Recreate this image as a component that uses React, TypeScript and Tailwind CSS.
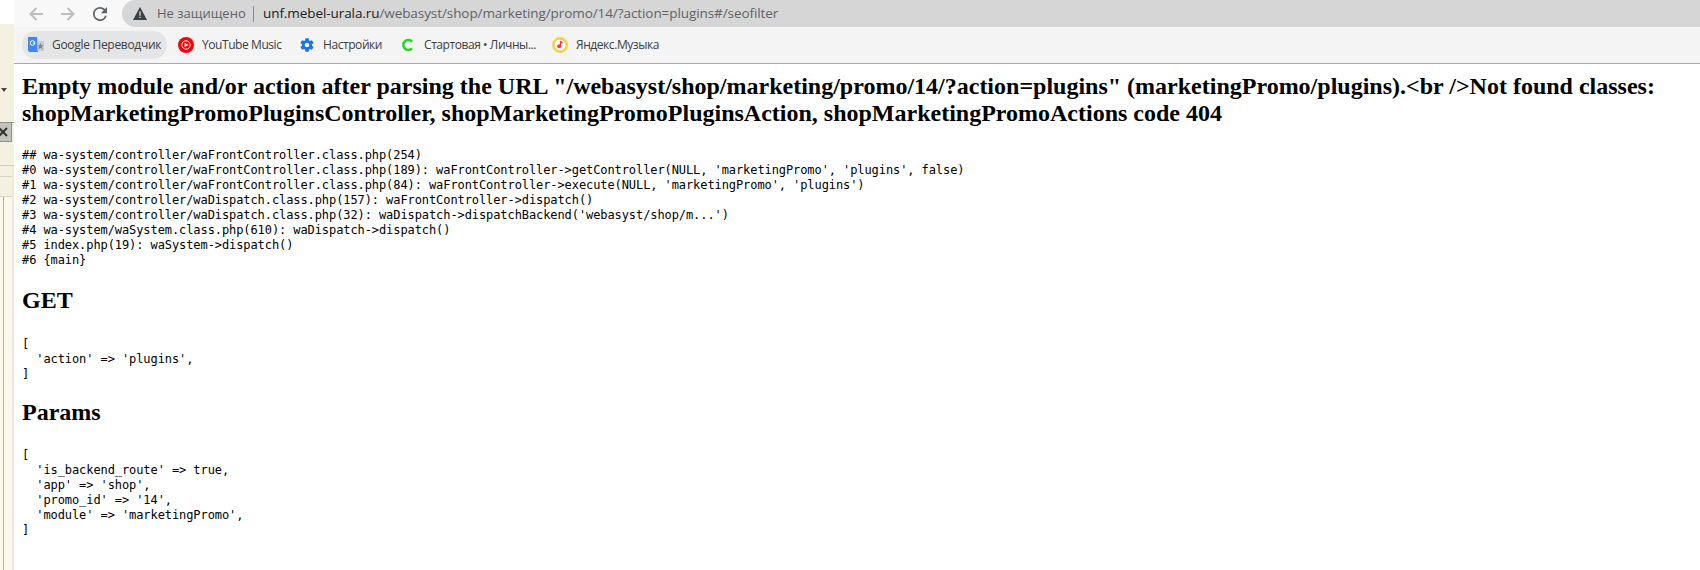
import React from "react";

const TRACE = `## wa-system/controller/waFrontController.class.php(254)
#0 wa-system/controller/waFrontController.class.php(189): waFrontController->getController(NULL, 'marketingPromo', 'plugins', false)
#1 wa-system/controller/waFrontController.class.php(84): waFrontController->execute(NULL, 'marketingPromo', 'plugins')
#2 wa-system/controller/waDispatch.class.php(157): waFrontController->dispatch()
#3 wa-system/controller/waDispatch.class.php(32): waDispatch->dispatchBackend('webasyst/shop/m...')
#4 wa-system/waSystem.class.php(610): waDispatch->dispatch()
#5 index.php(19): waSystem->dispatch()
#6 {main}`;

const GET = `[
  'action' => 'plugins',
]`;

const PARAMS = `[
  'is_backend_route' => true,
  'app' => 'shop',
  'promo_id' => '14',
  'module' => 'marketingPromo',
]`;

function Bookmark({ icon, label, width, active, spacing }: { icon: React.ReactNode; label: string; width: string; active?: boolean; spacing?: string }) {
  return (
    <div className={`flex items-center h-[28px] shrink-0 rounded-full pl-[6px] gap-[8px] ${width} ${active ? "bg-[#e4e5e6]" : ""}`}>
      <span className="w-[16px] h-[16px] shrink-0 flex items-center justify-center">{icon}</span>
      <span className={`text-[12px] leading-[16px] text-[#3c4043] whitespace-nowrap font-['Open_Sans',sans-serif] ${spacing ?? "tracking-[-0.43px]"}`}>{label}</span>
    </div>
  );
}

function Pre({ children, className }: { children: string; className?: string }) {
  return <pre className={`font-['DejaVu_Sans_Mono',monospace] text-[12px] leading-[15px] tracking-[-0.085px] text-black ${className ?? ""}`}>{children}</pre>;
}

function Heading({ children, className }: { children: React.ReactNode; className?: string }) {
  return <h1 className={`font-['Liberation_Serif',serif] font-bold text-[24px] leading-[27px] text-black ${className ?? ""}`}>{children}</h1>;
}

export default function App() {
  return (
    <div className="w-[1700px] h-[570px] overflow-hidden flex bg-white">
      {/* neighbouring window sliver */}
      <div className="w-[14px] shrink-0 flex flex-col bg-[#f4f1e0]">
        <div className="h-[24px] bg-white shrink-0" />
        <div className="h-[63px] shrink-0" />
        <div className="h-[6px] shrink-0 flex justify-start items-center pl-[1px]">
          <svg width="6" height="4" viewBox="0 0 6 4"><path d="M0 0h6L3 4z" fill="#4a4a3a" /></svg>
        </div>
        <div className="h-[30px] shrink-0 border-b border-[#8f8f8f]" />
        <div className="h-[19px] shrink-0 bg-[#c2c2c0] border-r border-b border-[#8f8f8f] flex items-center overflow-hidden mr-[2px]">
          <svg width="10" height="10" viewBox="0 0 10 10" className="shrink-0 ml-[-2px]"><path d="M1 1l8 8M9 1l-8 8" stroke="#333" strokeWidth="2" /></svg>
        </div>
        <div className="h-[24px] shrink-0 border-b border-[#d0ccb8]" />
        <div className="flex-1 flex flex-col bg-[#fdf8ec] border-r-2 border-[#eee9d8]">
          <div className="h-[10px] shrink-0 bg-[#f4f1e0]" />
          <div className="h-[21px] shrink-0 border-y border-[#d8d4c0] bg-[#f4f1e0]" />
          <div className="flex-1 ml-[3px] border-l border-[#b5ae98]" />
        </div>
      </div>

      <div className="flex-1 min-w-0 flex flex-col">
        {/* address row */}
        <div className="h-[27px] shrink-0 flex items-center bg-[#f8f8f8]">
          <div className="flex items-center gap-[18px] pl-[15px] w-[108px] shrink-0">
            <svg width="14" height="14" viewBox="0 0 14 14" fill="none" stroke="#bdbdbd" strokeWidth="2"><path d="M14 7H1.5M7.5 1L1.5 7l6 6" /></svg>
            <svg width="14" height="14" viewBox="0 0 14 14" fill="none" stroke="#bdbdbd" strokeWidth="2"><path d="M0 7h12.5M6.5 1l6 6-6 6" /></svg>
            <svg width="14" height="14" viewBox="4 4 16 16" fill="#5f6368"><path d="M17.65 6.35A7.958 7.958 0 0 0 12 4a8 8 0 1 0 7.73 10h-2.08A6 6 0 1 1 12 6c1.66 0 3.14.69 4.22 1.78L13 11h7V4z" /></svg>
          </div>
          <div className="flex-1 h-[27px] rounded-l-full bg-[#d6d6d6] flex items-center pl-[11px]">
            <svg width="14" height="13" viewBox="0 0 14 13" className="shrink-0"><path d="M7 0l7 13H0z" fill="#3c4043" /><path d="M6.3 4.5h1.4v4.2H6.3zM6.3 9.7h1.4v1.4H6.3z" fill="#d6d6d6" /></svg>
            <span className="ml-[10px] text-[13px] text-[#5f6368] whitespace-nowrap font-['Open_Sans',sans-serif] w-[96px]">Не защищено</span>
            <span className="w-px h-[16px] bg-[#8a8a8a] shrink-0" />
            <span className="ml-[9px] text-[13.5px] whitespace-nowrap font-['Open_Sans',sans-serif] text-[#5f6368] tracking-[-0.08px]">
              <span className="text-[#202124]">unf.mebel-urala.ru</span>/webasyst/shop/marketing/promo/14/?action=plugins#/seofilter
            </span>
          </div>
        </div>

        {/* bookmarks bar */}
        <div className="h-[37px] shrink-0 flex items-center pl-[8px] bg-[#f4f4f4] border-b border-[#a9a9a9]">
          <Bookmark
            active
            width="w-[145px] mr-[5px]"
            label="Google Переводчик"
            spacing="tracking-[-0.3px]"
            icon={
              <svg width="16" height="16" viewBox="0 0 16 16">
                <path d="M0 0h9l1 15H2a2 2 0 0 1-2-2z" fill="#4285f4" />
                <path d="M9 4h7v10H9.5z" fill="#c9ccd1" />
                <path d="M12.5 5.8l.9 2.4 2.4.1-1.9 1.5.7 2.4-2.1-1.4-2.1 1.4.7-2.4-1.9-1.5 2.4-.1z" fill="#7d838c" />
                <circle cx="4.6" cy="6" r="2.3" fill="none" stroke="#fff" strokeWidth="1" />
                <path d="M4.8 6h2.2" stroke="#fff" strokeWidth="1" />
              </svg>
            }
          />
          <Bookmark
            width="w-[121px]"
            label="YouTube Music"
            icon={
              <svg width="16" height="16" viewBox="0 0 16 16">
                <circle cx="8" cy="8" r="8" fill="#f00" />
                <circle cx="8" cy="8" r="4.2" fill="none" stroke="#fff" strokeWidth="1" />
                <path d="M6.6 5.8L10.4 8l-3.8 2.2z" fill="#fff" />
              </svg>
            }
          />
          <Bookmark
            width="w-[101px]"
            label="Настройки"
            icon={
              <svg width="16" height="16" viewBox="0 0 24 24" fill="#1a73e8">
                <path d="M19.43 12.98c.04-.32.07-.64.07-.98s-.03-.66-.07-.98l2.11-1.65a.5.5 0 0 0 .12-.64l-2-3.46a.5.5 0 0 0-.61-.22l-2.49 1a7.3 7.3 0 0 0-1.69-.98l-.38-2.65A.49.49 0 0 0 14 2h-4a.49.49 0 0 0-.49.42l-.38 2.65c-.61.25-1.17.59-1.69.98l-2.49-1a.5.5 0 0 0-.61.22l-2 3.46a.5.5 0 0 0 .12.64l2.11 1.65c-.04.32-.07.65-.07.98s.03.66.07.98l-2.11 1.65a.5.5 0 0 0-.12.64l2 3.46c.12.22.39.3.61.22l2.49-1c.52.4 1.08.73 1.69.98l.38 2.65c.03.24.24.42.49.42h4c.25 0 .46-.18.49-.42l.38-2.65c.61-.25 1.17-.59 1.69-.98l2.49 1c.23.09.49 0 .61-.22l2-3.46a.5.5 0 0 0-.12-.64zM12 15.5a3.5 3.5 0 1 1 0-7 3.5 3.5 0 0 1 0 7z" />
              </svg>
            }
          />
          <Bookmark
            width="w-[152px]"
            label="Стартовая • Личны..."
            icon={
              <svg width="16" height="16" viewBox="0 0 16 16" fill="none">
                <path d="M12 4.6A5 5 0 1 0 12 11.4" stroke="#22d822" strokeWidth="2.6" />
              </svg>
            }
          />
          <Bookmark
            width="w-[110px]"
            label="Яндекс.Музыка"
            icon={
              <svg width="16" height="16" viewBox="0 0 16 16">
                <circle cx="8" cy="8" r="6.7" fill="#fff" stroke="#fc3" strokeWidth="2.4" />
                <circle cx="8" cy="8" r="4.6" fill="#fff" />
                <circle cx="7.2" cy="9.2" r="2" fill="#f33" />
                <path d="M8 9V3.8l2.6 1v1.6L9 6v3z" fill="#f33" />
              </svg>
            }
          />
        </div>

        {/* page */}
        <div className="flex-1 pl-[8px] pr-[8px] pt-[9px] bg-white">
          <Heading>
            Empty module and/or action after parsing the URL "/webasyst/shop/marketing/promo/14/?action=plugins" (marketingPromo/plugins).&lt;br /&gt;Not found classes: shopMarketingPromoPluginsController, shopMarketingPromoPluginsAction, shopMarketingPromoActions code 404
          </Heading>
          <Pre className="mt-[21px]">{TRACE}</Pre>
          <Heading className="mt-[19px]">GET</Heading>
          <Pre className="mt-[23px]">{GET}</Pre>
          <Heading className="mt-[17px]">Params</Heading>
          <Pre className="mt-[22px]">{PARAMS}</Pre>
        </div>
      </div>
    </div>
  );
}
